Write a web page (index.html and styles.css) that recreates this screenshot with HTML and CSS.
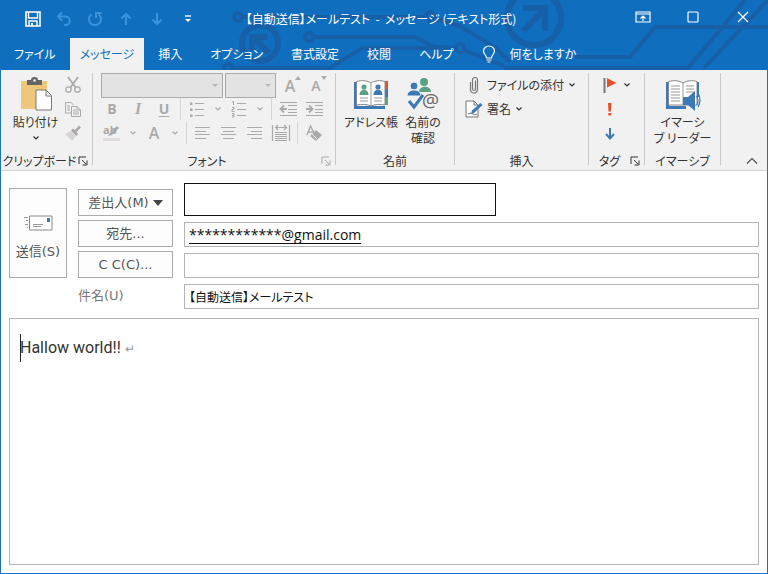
FILE: index.html
```
<!DOCTYPE html>
<html lang="ja">
<head>
  <meta charset="UTF-8" />
  <meta name="viewport" content="width=device-width, initial-scale=1" />
  <title>【自動送信】メールテスト - メッセージ (テキスト形式)</title>
  <link rel="stylesheet" href="styles.css">
</head>
<body>
  <svg class="defs" aria-hidden="true">
    <symbol id="chevron" viewBox="0 0 8 8"><path d="M1.5 2.5 4 5l2.500-2.500" fill="none" stroke="currentColor" stroke-width="1.200"/></symbol>
    <symbol id="launcher" viewBox="0 0 10 10"><path d="M1 8V1h7M4 4l4 4M9 4.500V9H4.500" fill="none" stroke="currentColor"/></symbol>
  </svg>

  <div class="window">
    <header class="top">
      <!-- 背景の回路模様 -->
      <svg class="circuit" viewBox="0 0 768 70" preserveAspectRatio="xMidYMin slice" aria-hidden="true">
        <g fill="none" stroke="#175fa6" stroke-width="4">
          <circle cx="238" cy="17" r="4"/><path d="M243 17h183"/><circle cx="430" cy="16" r="4"/>
          <path d="M434 18l26 8 36 22 14 14"/>
          <circle cx="309" cy="37" r="4"/><path d="M314 37h101l20 10 20 1"/>
          <circle cx="460" cy="48" r="4"/><path d="M464 50l40 16"/>
          <path d="M232 68h98l32-20h74"/><circle cx="228" cy="68" r="4"/>
          <path d="M504 68h184l57-68M704 68l64-68M575 57h55l25-30h113"/>
        </g>
        <g fill="none" stroke="#175fa6" stroke-width="6">
          <circle cx="260" cy="43" r="18"/><path d="M269 53l-14-14M252 51V37h15"/>
          <circle cx="534" cy="18" r="27"/><path d="M523 31l20-20M523 8h22v23"/>
        </g>
      </svg>

      <div class="titlebar">
        <div class="quick">
          <button type="button" aria-label="上書き保存"><svg width="16" height="16" viewBox="0 0 16 16"><path d="M1 1h14v14H1z" fill="none" stroke="#fff" stroke-width="1.600"/><path d="M3.500 1v6h9V1M4 15v-5h8v5" fill="none" stroke="#fff" stroke-width="1.400"/><path d="M6 12h2v3H6z" fill="#fff"/></svg></button>
          <button type="button" class="dim" aria-label="元に戻す"><svg width="16" height="16" viewBox="0 0 16 16"><path d="M6 1.500 2 5.500l4 4M2 5.500h7.500a4.200 4.200 0 0 1 0 8.500H8" fill="none" stroke="currentColor" stroke-width="2"/></svg></button>
          <button type="button" class="dim" aria-label="やり直し"><svg width="16" height="16" viewBox="0 0 16 16"><path d="M4.500 3.200a6 6 0 1 0 7 0M9 7V2h5.500" fill="none" stroke="currentColor" stroke-width="2"/></svg></button>
          <button type="button" class="dim" aria-label="前のアイテム"><svg width="16" height="16" viewBox="0 0 16 16"><path d="M8 14V3M3.500 7.500 8 3l4.500 4.500" fill="none" stroke="currentColor" stroke-width="2"/></svg></button>
          <button type="button" class="dim" aria-label="次のアイテム"><svg width="16" height="16" viewBox="0 0 16 16"><path d="M8 2v11M3.500 8.500 8 13l4.500-4.500" fill="none" stroke="currentColor" stroke-width="2"/></svg></button>
          <button type="button" aria-label="カスタマイズ"><svg width="8" height="8" viewBox="0 0 8 8"><path d="M1 1h6" stroke="#fff" stroke-width="1.400"/><path d="M1 4h6L4 7z" fill="#fff"/></svg></button>
        </div>
        <h1 class="title">【自動送信】メールテスト&nbsp; -&nbsp; メッセージ (テキスト形式)</h1>
        <div class="controls">
          <button type="button" aria-label="リボンの表示オプション"><svg width="16" height="12" viewBox="0 0 16 12"><path d="M1 1h14v10H1zM1 3h14M8 10V5M5.500 7.500 8 5l2.500 2.500" fill="none" stroke="#fff" stroke-width="1.200"/></svg></button>
          <button type="button" aria-label="最大化"><svg width="12" height="12" viewBox="0 0 12 12"><rect x="1" y="1" width="10" height="10" rx="1" fill="none" stroke="#fff" stroke-width="1.200"/></svg></button>
          <button type="button" aria-label="閉じる"><svg width="12" height="12" viewBox="0 0 12 12"><path d="M1 1l10 10M11 1 1 11" stroke="#fff" stroke-width="1.300"/></svg></button>
        </div>
      </div>

      <nav class="tabs">
        <a href="#">ファイル</a>
        <a href="#" class="active">メッセージ</a>
        <a href="#">挿入</a>
        <a href="#">オプション</a>
        <a href="#">書式設定</a>
        <a href="#">校閲</a>
        <a href="#">ヘルプ</a>
        <a href="#" class="tell-me">
          <svg width="14" height="18" viewBox="0 0 14 18"><path d="M4.500 13C4.500 10 1.500 9 1.500 6a5.500 5 0 0 1 11 0c0 3-3 4-3 7zM4.500 15h5M5.500 17h3" fill="none" stroke="#fff" stroke-width="1.200"/></svg>
          何をしますか
        </a>
      </nav>
    </header>

    <section class="ribbon">
      <div class="group group-clipboard">
        <div class="tools">
          <button type="button" class="big">
            <svg width="34" height="34" viewBox="0 0 34 34"><path d="M2 4h26v28H2z" fill="#efc77c"/><path d="M8 3h4a3.500 3 0 0 1 7 0h4v5H8z" fill="#666"/><circle cx="15.500" cy="3.500" r="1.300" fill="#f1f1f1"/><path d="M17 13h10l5.500 5.500V33H17z" fill="#fff" stroke="#777"/><path d="M27 13v6h5.500" fill="none" stroke="#777"/></svg>
            貼り付け
            <svg class="more" width="8" height="8"><use href="#chevron"/></svg>
          </button>
          <div class="stack disabled">
            <button type="button" aria-label="切り取り" disabled><svg width="18" height="18" viewBox="0 0 18 18"><path d="M4 1l8 11M14 1 6 12" stroke="currentColor" stroke-width="1.800"/><circle cx="4.500" cy="13.500" r="2.700" fill="none" stroke="currentColor" stroke-width="1.300"/><circle cx="13.500" cy="13.500" r="2.700" fill="none" stroke="currentColor" stroke-width="1.300"/></svg></button>
            <button type="button" aria-label="コピー" disabled><svg width="18" height="18" viewBox="0 0 18 18"><path d="M7 13H1.500V2.500H7L9.500 5M3 6h3M3 8h3M3 10h3" fill="none" stroke="currentColor"/><path d="M7.500 6.500H13L16.500 10v6.500h-9zM13 6.500V10h3.500M9 10h3M9 12h6M9 14h6" fill="#f4f0f4" stroke="currentColor"/></svg></button>
            <button type="button" aria-label="書式のコピー" disabled><svg width="18" height="18" viewBox="0 0 18 18"><path d="M1 10l6-3 5 5-4 5z" fill="#d8d3d8"/><path d="M7 6.500 9 4.500l2 1.500 4-4.500 2 2-4.500 4.500 1.500 2-1.500 2z" fill="currentColor"/></svg></button>
          </div>
        </div>
        <div class="caption"><span>クリップボード</span><button type="button" aria-label="クリップボードの詳細"><svg width="10" height="10"><use href="#launcher"/></svg></button></div>
      </div>

      <div class="group group-font">
        <div class="font-tools disabled">
          <div class="row">
            <span class="combo combo-font"><select aria-label="フォント" disabled></select></span>
            <span class="combo combo-size"><select aria-label="フォント サイズ" disabled></select></span>
            <button type="button" class="grow" aria-label="フォント サイズの拡大" disabled>A<svg width="6" height="4" viewBox="0 0 6 4"><path d="M0 4 3 0l3 4z" fill="currentColor"/></svg></button>
            <button type="button" class="grow shrink" aria-label="フォント サイズの縮小" disabled>A<svg width="6" height="4" viewBox="0 0 6 4"><path d="M0 0h6L3 4z" fill="currentColor"/></svg></button>
          </div>
          <div class="row">
            <button type="button" disabled><b>B</b></button>
            <button type="button" class="italic" disabled>I</button>
            <button type="button" class="underline" disabled>U</button>
            <i class="sep"></i>
            <button type="button" aria-label="箇条書き" disabled><svg width="16" height="16" viewBox="0 0 16 16"><path d="M6 2.500h9M6 8.500h9M6 14.500h9" stroke="currentColor"/><path d="M1 1.500h2.500V4H1zM1 7.500h2.500V10H1zM1 13.500h2.500V16H1z" fill="currentColor"/></svg></button>
            <button type="button" class="drop" aria-label="箇条書きの種類" disabled><svg width="8" height="8"><use href="#chevron"/></svg></button>
            <button type="button" aria-label="段落番号" disabled><svg width="16" height="16" viewBox="0 0 16 16"><path d="M6 2.500h9M6 8.500h9M6 14.500h9M1 1l1.500-.5V4M1 6.500h2v2H1v2h2.500M1 12.500h2V16H1M1 14.300h2" fill="none" stroke="currentColor"/></svg></button>
            <button type="button" class="drop" aria-label="段落番号の種類" disabled><svg width="8" height="8"><use href="#chevron"/></svg></button>
            <i class="sep"></i>
            <button type="button" aria-label="インデントを減らす" disabled><svg width="18" height="16" viewBox="0 0 18 16"><path d="M1 1.500h17M9 4.500h9M9 8.500h9M9 11.500h9M1 14.500h17" stroke="currentColor"/><path d="M8 8H2M5 4.500 1.500 8 5 11.500" fill="none" stroke="currentColor" stroke-width="1.800"/></svg></button>
            <button type="button" aria-label="インデントを増やす" disabled><svg width="18" height="16" viewBox="0 0 18 16"><path d="M1 1.500h17M10 4.500h8M10 8.500h8M10 11.500h8M1 14.500h17" stroke="currentColor"/><path d="M1 8h6M4 4.500 7.500 8 4 11.500" fill="none" stroke="currentColor" stroke-width="1.800"/></svg></button>
          </div>
          <div class="row">
            <button type="button" aria-label="蛍光ペンの色" disabled><svg width="18" height="18" viewBox="0 0 18 18"><path d="M0 14h17v3H0z" fill="#e2dbe2"/><text x="0" y="10" class="ab">ab</text><path d="M5 12l2-3 7-7 2 2-7 7z" fill="currentColor"/></svg></button>
            <button type="button" class="drop" aria-label="蛍光ペンの色を選択" disabled><svg width="8" height="8"><use href="#chevron"/></svg></button>
            <button type="button" class="color" aria-label="フォントの色" disabled>A</button>
            <button type="button" class="drop" aria-label="フォントの色を選択" disabled><svg width="8" height="8"><use href="#chevron"/></svg></button>
            <i class="sep"></i>
            <button type="button" aria-label="左揃え" disabled><svg width="16" height="12" viewBox="0 0 16 12"><path d="M0 .5h15M0 4.500h11M0 7.500h15M0 11.500h11" stroke="currentColor"/></svg></button>
            <button type="button" aria-label="中央揃え" disabled><svg width="16" height="12" viewBox="0 0 16 12"><path d="M0 .5h15M2 4.500h11M0 7.500h15M2 11.500h11" stroke="currentColor"/></svg></button>
            <button type="button" aria-label="右揃え" disabled><svg width="16" height="12" viewBox="0 0 16 12"><path d="M0 .5h15M4 4.500h11M0 7.500h15M4 11.500h11" stroke="currentColor"/></svg></button>
            <button type="button" aria-label="均等割り付け" disabled><svg width="18" height="18" viewBox="0 0 18 18"><path d="M.5 1v16M17.500 1v16M3 8.500h12M3 10.500h12M3 12.500h12M3 14.500h12M3 16.500h12M3 3.500h12M6 1 3.500 3.500 6 6M12 1l2.500 2.500L12 6" fill="none" stroke="currentColor" stroke-width="1.200"/></svg></button>
            <i class="sep"></i>
            <button type="button" aria-label="書式のクリア" disabled><svg width="16" height="18" viewBox="0 0 16 18"><path d="M1 11 4.500 2 8 9M2.500 8h4" fill="none" stroke="currentColor" stroke-width="1.500"/><path d="M10 6l6 5-6 6-6-5z" fill="currentColor"/><path d="M6 10l5 5" stroke="#f1f1f1"/></svg></button>
          </div>
        </div>
        <div class="caption"><span>フォント</span><button type="button" class="disabled" aria-label="フォントの詳細" disabled><svg width="10" height="10"><use href="#launcher"/></svg></button></div>
      </div>

      <div class="group group-names">
        <div class="tools">
          <button type="button" class="big">
            <svg width="34" height="34" viewBox="0 0 34 34"><path d="M0 5h3v24h28v3H0z" fill="#3d79b5"/><path d="M31 4h3v8h-3z" fill="#e0572f"/><path d="M31 12h3v8h-3z" fill="#3d79b5"/><path d="M31 20h3v8h-3z" fill="#5ba283"/><path d="M2.500 4.500C8 3 13 3.500 17 6c4-2.500 9-3 14-1.500V28c-5-1-10-1-14 1-4-2-9-2-14.500-1z" fill="#fff" stroke="#888"/><path d="M17 6v23M6 21h8M6 24h8M20 21h8M20 24h8" stroke="#999"/><circle cx="10" cy="10" r="2.600" fill="#5ba283"/><path d="M5.500 18c0-7 9-7 9 0z" fill="#5ba283"/><circle cx="24" cy="10" r="2.600" fill="#3d79b5"/><path d="M19.500 18c0-7 9-7 9 0z" fill="#3d79b5"/></svg>
            アドレス帳
          </button>
          <button type="button" class="big">
            <svg width="34" height="34" viewBox="0 0 34 34"><circle cx="18" cy="5" r="4" fill="#5ba283"/><path d="M13 15c0-7 12-7 12 0z" fill="#5ba283"/><circle cx="8" cy="9" r="4" fill="#3d79b5" stroke="#f1f1f1"/><path d="M1 19c0-8 14-8 14 0z" fill="#3d79b5" stroke="#f1f1f1"/><path d="M3 24l5 6 9-12" fill="none" stroke="#3d79b5" stroke-width="3"/><circle cx="25" cy="25" r="9" fill="#f1f1f1"/><text x="16" y="30" class="at">@</text></svg>
            名前の<br>確認
          </button>
        </div>
        <div class="caption"><span>名前</span></div>
      </div>

      <div class="group group-insert">
        <div class="stack">
          <button type="button" class="line">
            <svg width="18" height="18" viewBox="0 0 18 18"><path d="M10.500 4.500V13a1.500 1.500 0 0 1-3 0V4a2.500 2.500 0 0 1 5 0v9.500a3.500 3.500 0 0 1-7 0V6" fill="none" stroke="#777" stroke-width="1.200"/></svg>
            ファイルの添付
            <svg width="8" height="8"><use href="#chevron"/></svg>
          </button>
          <button type="button" class="line">
            <svg width="18" height="18" viewBox="0 0 18 18"><path d="M1 1h8l4 4v12H1z" fill="#fff" stroke="#777"/><path d="M9 1v4h4M3 14q3-2 5 0t4 0" fill="none" stroke="#777"/><path d="M6 14l1-3.500L15.500 3l2 2L9 13z" fill="#3d79b5"/></svg>
            署名
            <svg width="8" height="8"><use href="#chevron"/></svg>
          </button>
        </div>
        <div class="caption"><span>挿入</span></div>
      </div>

      <div class="group group-tags">
        <div class="stack">
          <button type="button" class="line" aria-label="フラグの設定"><svg width="14" height="18" viewBox="0 0 14 18"><path d="M1.500 2v15" stroke="#777" stroke-width="2"/><path d="M4 2l9.500 5L4 11.500z" fill="#e0522c"/></svg><svg width="8" height="8"><use href="#chevron"/></svg></button>
          <button type="button" class="line" aria-label="重要度 - 高"><svg width="14" height="18" viewBox="0 0 14 18"><path d="M5 3h3.500L8 11.500H5.500zM5.300 13h3v2.500h-3z" fill="#e0522c"/></svg></button>
          <button type="button" class="line" aria-label="重要度 - 低"><svg width="14" height="18" viewBox="0 0 14 18"><path d="M7 4v10M3 10l4 4.500L11 10" fill="none" stroke="#3d79b5" stroke-width="2"/></svg></button>
        </div>
        <div class="caption"><span>タグ</span><button type="button" aria-label="タグの詳細"><svg width="10" height="10"><use href="#launcher"/></svg></button></div>
      </div>

      <div class="group group-immersive">
        <div class="tools">
          <button type="button" class="big">
            <svg width="34" height="34" viewBox="0 0 34 34"><path d="M0 5h3v24h17v3H0z" fill="#3d79b5"/><path d="M2.500 4.500C8 3 13 3.500 17 6c4-2.500 9-3 14-1.500V28H2.500z" fill="#fff" stroke="#888"/><path d="M31 5h2v15h-2z" fill="#3d79b5"/><path d="M17 6v22M5 9h9M5 12h9M5 15h9M5 18h9M5 21h9M5 24h9M20 9h8M20 12h8M20 15h8" stroke="#999"/><path d="M17 20h5l7-6v20l-7-6h-5z" fill="#3d79b5"/><path d="M30.500 19q3 5 0 9M32 16q4 7 0 14" fill="none" stroke="#3d79b5" stroke-width="1.200"/></svg>
            イマーシ<br>ブ リーダー
          </button>
        </div>
        <div class="caption"><span>イマーシブ</span></div>
      </div>

      <button type="button" class="collapse" aria-label="リボンを折りたたむ"><svg width="12" height="8" viewBox="0 0 12 8"><path d="M1 6.500 6 1.500l5 5" fill="none" stroke="#555" stroke-width="1.200"/></svg></button>
    </section>

    <form class="compose">
      <div class="fields">
        <button type="button" class="send">
          <svg width="30" height="18" viewBox="0 0 30 18"><path d="M6.500 2h22.500v14H6.500z" fill="#fff" stroke="#888"/><path d="M1 3.500h4M3 6.500h2M2 10.500h3M4 13.500h1M10 10.500h10M10 12.500h8" stroke="#999"/><path d="M24 4h3v4h-3z" fill="#3d79b5"/></svg>
          送信(S)
        </button>
        <button type="button" class="pick" id="from-label">差出人(M)<svg width="10" height="6" viewBox="0 0 10 6"><path d="M0 0h10L5 6z" fill="#444"/></svg></button>
        <input class="field field-from" type="text" aria-labelledby="from-label">
        <button type="button" class="pick" id="to-label">宛先...</button>
        <input class="field field-to" type="text" aria-labelledby="to-label" value="************@gmail.com">
        <button type="button" class="pick" id="cc-label">C C(C)...</button>
        <input class="field" type="text" aria-labelledby="cc-label">
        <label class="subject-label" for="subject">件名(U)</label>
        <input class="field" type="text" id="subject" value="【自動送信】メールテスト">
      </div>

      <div class="message">
        <textarea aria-label="本文">Hallow world!!</textarea>
        <span class="caret"></span>
        <span class="return">↵</span>
      </div>
    </form>
  </div>
</body>
</html>
```
FILE: styles.css
```
* {
  box-sizing: border-box;
}

body {
  margin: 0;
  font-family: "Noto Sans CJK JP", sans-serif;
  font-size: 12px;
  line-height: 16px;
  font-feature-settings: "palt";
  color: #333;
  background: #fff;
}

button,
input,
select,
textarea {
  margin: 0;
  padding: 0;
  border: 0;
  border-radius: 0;
  background: none;
  color: inherit;
  font: inherit;
  font-feature-settings: inherit;
}

svg {
  display: block;
  flex-shrink: 0;
  overflow: visible;
}

.defs {
  position: absolute;
  width: 0;
  height: 0;
}

.window {
  display: flex;
  flex-direction: column;
  min-height: 100vh;
  border: 1px solid #1a72c0;
  border-top: 0;
}

/* タイトルバー */
.top {
  position: relative;
  margin: 0 -1px;
  background: #106ebe;
  color: #fff;
}

.circuit {
  position: absolute;
  inset: 0;
  width: 100%;
  height: 100%;
  overflow: hidden;
}

.titlebar {
  position: relative;
  display: grid;
  grid-template-columns: 1fr auto 1fr;
  align-items: center;
  height: 38px;
}

.quick,
.controls {
  display: flex;
}

.quick {
  padding-left: 17px;
}

.quick button,
.controls button {
  display: flex;
  align-items: center;
  justify-content: center;
  height: 38px;
}

.quick button {
  width: 31px;
}

.quick .dim {
  color: #3a93dc;
}

.controls {
  justify-content: flex-end;
}

.controls button {
  width: 50px;
  height: 38px;
  padding-bottom: 4px;
}

.title {
  margin: 0;
  padding-right: 6px;
  font-size: 12px;
  font-weight: 400;
  white-space: nowrap;
}

.tabs {
  position: relative;
  display: flex;
  height: 32px;
}

.tabs a {
  display: flex;
  align-items: center;
  padding: 0 14px;
  color: #fff;
  text-decoration: none;
  white-space: nowrap;
}

.tabs .active {
  padding: 0 10px;
  background: #f1f1f1;
  color: #106ebe;
}

.tabs .tell-me {
  gap: 14px;
}

/* リボン */
.ribbon {
  display: flex;
  padding: 3px 0 5px;
  background: #f1f1f1;
  border-bottom: 1px solid #d2d2d2;
}

.group {
  display: flex;
  flex-direction: column;
  flex-shrink: 0;
  height: 92px;
  border-right: 1px solid #c8c8c8;
}

.group-clipboard {
  width: 92px;
}

.group-font {
  width: 243px;
}

.group-names {
  width: 119px;
}

.group-insert {
  width: 134px;
}

.group-tags {
  width: 56px;
}

.group-immersive {
  width: 76px;
}

.tools {
  display: flex;
  flex: 1;
  justify-content: center;
  padding-top: 4px;
}

.big {
  display: flex;
  flex-direction: column;
  align-items: center;
  flex: 1;
  white-space: nowrap;
}

.big svg:first-child {
  margin-bottom: 3px;
}

.big .more {
  margin-top: 4px;
}

.group-clipboard .big {
  padding-left: 6px;
}

.group-names .tools {
  padding-left: 8px;
  padding-right: 6px;
}

.stack {
  display: flex;
  flex-direction: column;
  flex: 1;
}

.stack button {
  display: flex;
  align-items: center;
  height: 24px;
}

.group-clipboard .stack {
  flex: none;
  width: 28px;
  margin-top: -4px;
}

.line {
  gap: 4px;
  white-space: nowrap;
}

.group-insert .line {
  padding-left: 10px;
}

.group-tags .line {
  padding-left: 14px;
  gap: 6px;
}

.disabled {
  color: #aaa;
}

.caption {
  display: flex;
  align-items: center;
  margin-top: auto;
  margin-bottom: -4px;
  height: 16px;
}

.caption span {
  flex: 1;
  text-align: center;
  white-space: nowrap;
}

.caption button {
  width: 14px;
}

.font-tools {
  padding-left: 6px;
}

.font-tools .row {
  display: flex;
  align-items: center;
  height: 24px;
}

.font-tools button {
  display: flex;
  align-items: center;
  justify-content: center;
  width: 26px;
  height: 24px;
  font-family: "Open Sans", sans-serif;
  font-size: 14px;
}

.font-tools .drop {
  width: 16px;
}

.font-tools .italic {
  font-family: "Liberation Serif", serif;
  font-size: 16px;
  font-style: italic;
  font-weight: 700;
}

.font-tools .underline {
  font-weight: 700;
  text-decoration: underline;
  text-underline-offset: 2px;
}

.font-tools .color,
.font-tools .grow {
  font-size: 16px;
  font-weight: 600;
}

.font-tools .grow {
  align-items: flex-start;
  padding-top: 3px;
  line-height: 20px;
}

.font-tools .grow:first-of-type {
  margin-left: 4px;
}

.font-tools .shrink {
  font-size: 14px;
}

.combo {
  position: relative;
  height: 25px;
  margin-left: 2px;
  border: 1px solid #ababab;
  background: #e3e3e3;
}

.combo::after {
  content: "";
  position: absolute;
  right: 4px;
  top: 10px;
  border: 3px solid transparent;
  border-top-color: #b8b8b8;
}

.combo select {
  width: 100%;
  height: 100%;
  appearance: none;
}

.combo-font {
  width: 122px;
}

.combo-size {
  width: 51px;
}

.sep {
  width: 1px;
  height: 22px;
  margin: 0 3px;
  background: #d6d6d6;
}

.ab {
  font: 700 11px "Open Sans", sans-serif;
  fill: currentColor;
}

.at {
  font: 19px "Open Sans", sans-serif;
  fill: #666;
}

.collapse {
  align-self: flex-end;
  margin-left: auto;
  padding: 0 9px 0 0;
}

/* 宛先・件名 */
.compose {
  display: flex;
  flex-direction: column;
  flex: 1;
  padding: 12px 8px 8px;
}

.fields {
  display: grid;
  grid-template-columns: 58px 95px 1fr;
  grid-template-rows: 33px 27px 27px 27px;
  gap: 4px 11px;
  align-items: end;
}

.send,
.pick {
  display: flex;
  align-items: center;
  justify-content: center;
  border: 1px solid #ababab;
  background: #fdfdfd;
  color: #555;
}

.send,
.pick,
.subject-label {
  font-family: "DejaVu Sans", "Noto Sans CJK JP", sans-serif;
  font-size: 13px;
}

.send {
  grid-row: 1 / 4;
  flex-direction: column;
  gap: 12px;
  height: 90px;
  padding-top: 8px;
}

.pick {
  grid-column: 2;
  gap: 4px;
  height: 27px;
}

.subject-label {
  grid-column: 2;
  align-self: center;
  color: #777;
}

.field {
  width: 100%;
  height: 25px;
  padding: 0 4px;
  border: 1px solid #b4b4b4;
  background: #fff;
  color: #111;
}

.field-from {
  width: 312px;
  max-width: 100%;
  height: 33px;
  border: 1px solid #111;
}

.field-to {
  font-family: "Open Sans", sans-serif;
  font-size: 14px;
  text-decoration: underline;
  text-underline-offset: 3px;
}

/* 本文 */
.message {
  position: relative;
  display: flex;
  flex: 1;
  margin-top: 9px;
  border: 1px solid #b4b4b4;
}

.message textarea {
  flex: 1;
  min-height: 120px;
  padding: 17px 10px;
  font-family: Roboto, "Noto Sans CJK JP", sans-serif;
  font-size: 16px;
  line-height: 24px;
  font-feature-settings: normal;
  resize: none;
  outline: 0;
}

.caret {
  position: absolute;
  left: 10px;
  top: 15px;
  width: 1px;
  height: 28px;
  background: #222;
}

.return {
  position: absolute;
  left: 115px;
  top: 21px;
  color: #999;
}
```
